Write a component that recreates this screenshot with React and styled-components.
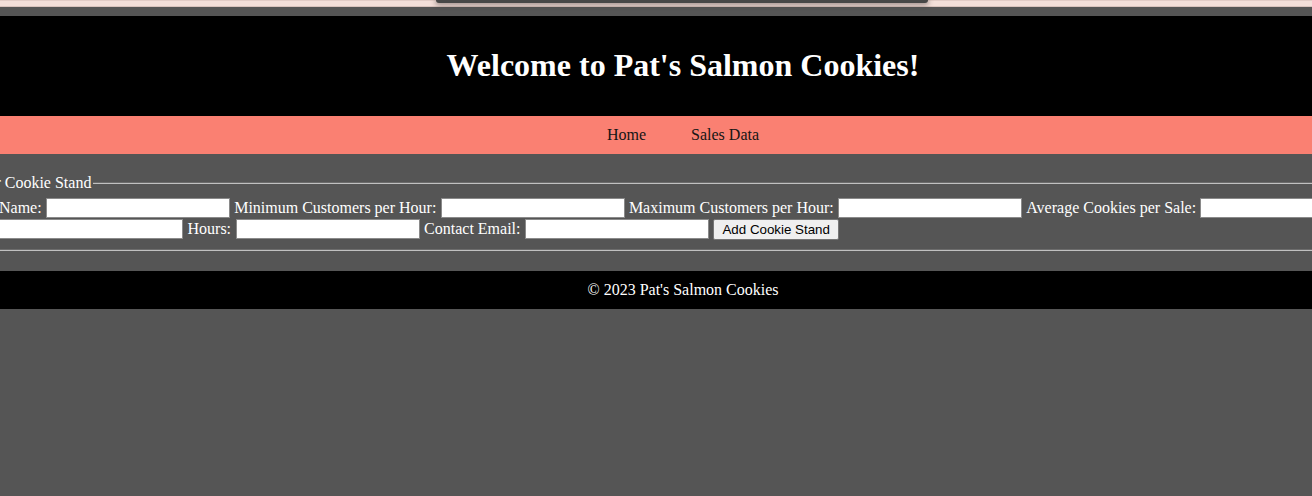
import React from "react";
import styled, { createGlobalStyle } from "styled-components";

const GlobalStyle = createGlobalStyle`
  html, body {
    margin: 0;
    padding: 0;
    overflow: hidden;
  }
  body {
    background: #555555;
    font-family: "Liberation Serif", "Times New Roman", serif;
    font-size: 16px;
    color: #ffffff;
  }
`;

const Page = styled.div`
  width: 1366px;
  display: flex;
  flex-direction: column;
`;

const TopStrip = styled.div`
  height: 7px;
  box-sizing: border-box;
  background: #f3dfd9;
  border-top: 1px solid #e2ccc6;
  border-bottom: 1px solid #d9c3bd;
  display: flex;
  justify-content: center;
  align-items: flex-start;
`;

const Notch = styled.div`
  width: 492px;
  height: 3px;
  margin-top: -1px;
  margin-left: -2px;
  background: #474747;
  border-radius: 0 0 7px 7px;
  box-shadow: 0 1px 5px 1px rgba(40, 30, 30, 0.45);
`;

const Header = styled.header`
  margin-top: 9px;
  height: 100px;
  background: #000000;
  display: flex;
  align-items: center;
  justify-content: center;
`;

const Title = styled.h1`
  margin: 0 0 2px;
  font-size: 32px;
  font-weight: bold;
  color: #ffffff;
`;

const Nav = styled.nav`
  height: 38px;
  background: #fa8072;
  display: flex;
  align-items: center;
  justify-content: center;
`;

const NavList = styled.ul`
  list-style: none;
  margin: 0;
  padding: 0;
  display: flex;
  gap: 45px;
`;

const NavLink = styled.a`
  color: #151515;
  text-decoration: none;
  font-size: 16px;
`;

const Main = styled.main`
  padding: 20px 0 20px 0;
`;

const Fieldset = styled.fieldset`
  margin: 0 0 0 -15px;
  padding: 5.6px 12px 9px;
  border: 2px groove rgb(192, 192, 192);
  min-width: 0;
`;

const Legend = styled.legend`
  padding: 0 2px;
  margin-left: -62.5px;
  color: #ffffff;
  font-size: 16px;
`;

const Row = styled.div`
  height: 21px;
  display: flex;
  align-items: center;
  gap: ${(p) => p.$gap}px;
  white-space: nowrap;
`;

const Label = styled.label`
  color: #ffffff;
  font-size: 16px;
`;

const Input = styled.input`
  flex: none;
  width: 184px;
  height: 20px;
  box-sizing: border-box;
  margin: 0;
  padding: 1px 2px;
  border: 1px solid #8a8a8a;
  background: #ffffff;
  font-family: "Liberation Sans", Arial, sans-serif;
  font-size: 13.33px;
`;

const Button = styled.button`
  flex: none;
  height: 21px;
  box-sizing: border-box;
  margin: 0;
  padding: 0 8px;
  border: 1px solid #767676;
  border-radius: 2px;
  background: #efefef;
  color: #000000;
  font-family: "Liberation Sans", Arial, sans-serif;
  font-size: 13.33px;
`;

const Footer = styled.footer`
  height: 38px;
  background: #000000;
  display: flex;
  align-items: center;
  justify-content: center;
  color: #ffffff;
  font-size: 16px;
`;

export default function App() {
  return (
    <>
      <GlobalStyle />
      <Page>
        <TopStrip>
          <Notch />
        </TopStrip>
        <Header>
          <Title>Welcome to Pat's Salmon Cookies!</Title>
        </Header>
        <Nav>
          <NavList>
            <li>
              <NavLink href="#">Home</NavLink>
            </li>
            <li>
              <NavLink href="#">Sales Data</NavLink>
            </li>
          </NavList>
        </Nav>
        <Main>
          <form onSubmit={(e) => e.preventDefault()}>
            <Fieldset>
              <Legend>Add Your Cookie Stand</Legend>
              <Row $gap={4.25}>
                <Label>Name:</Label>
                <Input type="text" />
                <Label>Minimum Customers per Hour:</Label>
                <Input type="text" />
                <Label>Maximum Customers per Hour:</Label>
                <Input type="text" />
                <Label>Average Cookies per Sale:</Label>
                <Input type="text" />
                <Label>Location:</Label>
              </Row>
              <Row $gap={4.5}>
                <Input type="text" />
                <Label>Hours:</Label>
                <Input type="text" />
                <Label>Contact Email:</Label>
                <Input type="email" />
                <Button type="submit">Add Cookie Stand</Button>
              </Row>
            </Fieldset>
          </form>
        </Main>
        <Footer>© 2023 Pat's Salmon Cookies</Footer>
      </Page>
    </>
  );
}
